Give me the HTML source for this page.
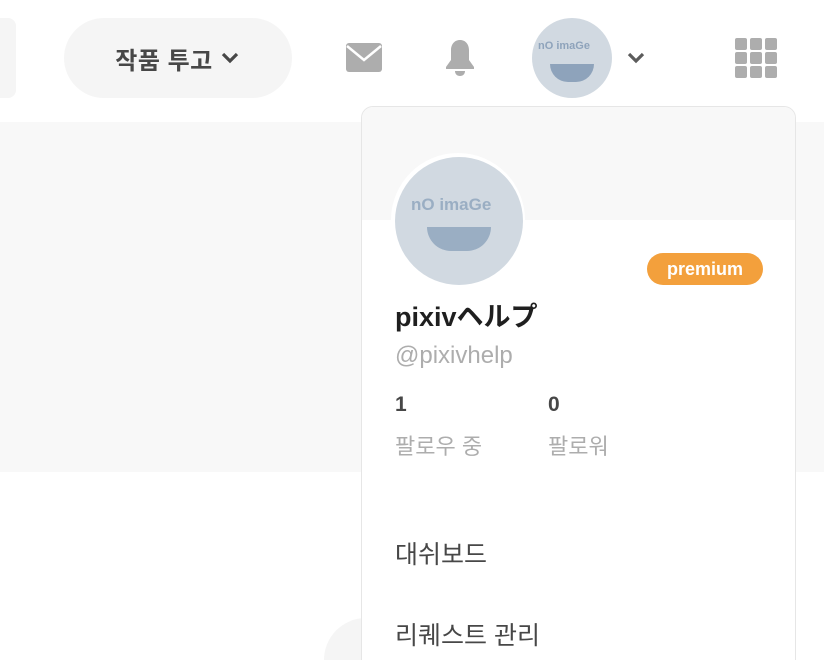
<!DOCTYPE html>
<html style="width:824px;height:660px;overflow:hidden"><head><meta charset="utf-8"><style>
*{margin:0;padding:0;box-sizing:border-box}
body{width:824px;height:660px;overflow:hidden;background:#fff;position:relative;font-family:"Liberation Sans","Noto Sans CJK KR",sans-serif}
.abs{position:absolute}
</style></head><body>
<div class="abs" style="left:-40px;top:18px;width:56px;height:80px;background:#f5f5f5;border-radius:8px"></div>
<div class="abs" style="left:64px;top:18px;width:228px;height:80px;background:#f5f5f5;border-radius:40px;display:flex;align-items:center;justify-content:center;font-size:24px;font-weight:bold;color:#474747;letter-spacing:0.5px">작품 투고<svg width="22" height="14" viewBox="0 0 20 14" style="margin-left:6px"><path d="M3 3l7 7 7-7" stroke="#474747" stroke-width="3.2" fill="none"/></svg></div>
<svg class="abs" style="left:346px;top:43px" width="36" height="30" viewBox="0 0 36 30"><rect x="0" y="0" width="36" height="29" rx="3" fill="#adadad"/><path d="M1 3l17 14 17-14" stroke="#fff" stroke-width="2.5" fill="none"/></svg>
<svg class="abs" style="left:443px;top:39px" width="34" height="38" viewBox="0 0 34 38"><path d="M17 1c-6 0-9 5-9 10v10l-5 7v2h28v-2l-5-7V11c0-5-3-10-9-10z" fill="#adadad"/><path d="M12 32h10c0 3-2 5-5 5s-5-2-5-5z" fill="#adadad"/></svg>
<div class="abs" style="left:532px;top:18px;width:80px;height:80px;border-radius:50%;background:#d1d9e1;overflow:hidden">
<div class="abs" style="left:6px;top:22px;font-size:11px;font-weight:bold;color:#8ea3bb;white-space:nowrap">nO imaGe</div>
<div class="abs" style="left:18px;top:46px;width:44px;height:18px;background:#8ea3bb;border-radius:0 0 22px 22px"></div></div>
<svg class="abs" style="left:626px;top:51px" width="20" height="14" viewBox="0 0 20 14"><path d="M3 3l7 7 7-7" stroke="#5c5c5c" stroke-width="3.2" fill="none"/></svg>
<svg class="abs" style="left:735px;top:38px" width="42" height="40" viewBox="0 0 42 40">
<g fill="#adadad"><rect x="0" y="0" width="12" height="12" rx="2"/><rect x="15" y="0" width="12" height="12" rx="2"/><rect x="30" y="0" width="12" height="12" rx="2"/><rect x="0" y="14" width="12" height="12" rx="2"/><rect x="15" y="14" width="12" height="12" rx="2"/><rect x="30" y="14" width="12" height="12" rx="2"/><rect x="0" y="28" width="12" height="12" rx="2"/><rect x="15" y="28" width="12" height="12" rx="2"/><rect x="30" y="28" width="12" height="12" rx="2"/></g></svg>
<div class="abs" style="left:0;top:122px;width:824px;height:350px;background:#f8f8f8"></div>
<div class="abs" style="left:324px;top:618px;width:120px;height:42px;border-radius:60px 60px 0 0;background:#f5f5f5"></div>
<div class="abs" style="left:361px;top:106px;width:435px;height:580px;background:#fff;border:1px solid #e6e6e6;border-radius:12px;overflow:hidden">
<div class="abs" style="left:0;top:0;width:435px;height:113px;background:#f8f8f8"></div>
<div class="abs" style="left:29px;top:46px;width:134px;height:134px;border-radius:50%;background:#fff"></div>
<div class="abs" style="left:33px;top:50px;width:128px;height:128px;border-radius:50%;background:#d1d9e1;overflow:hidden">
<div class="abs" style="left:16px;top:38px;font-size:17px;font-weight:bold;color:#9aaec3;white-space:nowrap">nO imaGe</div>
<div class="abs" style="left:32px;top:70px;width:64px;height:24px;background:#9aaec3;border-radius:0 0 32px 32px"></div></div>
<div class="abs" style="left:285px;top:146px;width:116px;height:32px;border-radius:16px;background:#f3a03c;color:#fff;font-weight:bold;font-size:18px;text-align:center;line-height:32px">premium</div>
<div class="abs" style="left:33px;top:188px;font-size:27px;font-weight:bold;color:#1f1f1f;white-space:nowrap">pixivヘルプ</div>
<div class="abs" style="left:33px;top:235px;font-size:24px;color:#adadad">@pixivhelp</div>
<div class="abs" style="left:33px;top:286px;font-size:21px;font-weight:bold;color:#474747">1</div>
<div class="abs" style="left:186px;top:286px;font-size:21px;font-weight:bold;color:#474747">0</div>
<div class="abs" style="left:33px;top:322px;font-size:22px;color:#adadad;white-space:nowrap">팔로우 중</div>
<div class="abs" style="left:186px;top:322px;font-size:22px;color:#adadad">팔로워</div>
<div class="abs" style="left:33px;top:428px;font-size:25px;color:#474747">대쉬보드</div>
<div class="abs" style="left:33px;top:509px;font-size:25px;color:#474747;white-space:nowrap">리퀘스트 관리</div>
</div>
</body></html>
